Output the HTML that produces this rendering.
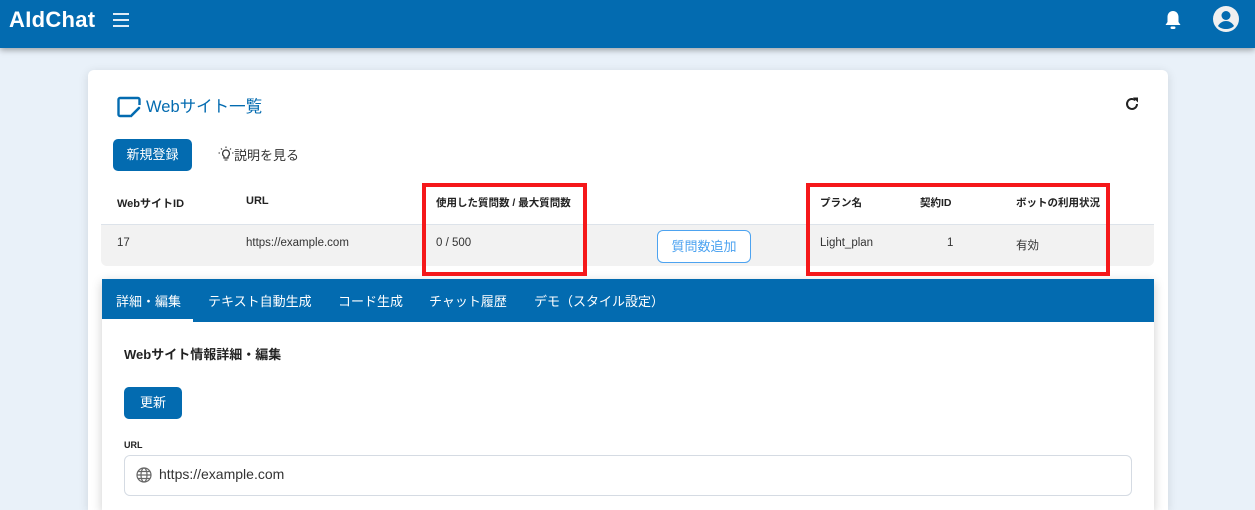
<!DOCTYPE html>
<html><head><meta charset="utf-8"><style>
*{box-sizing:border-box;margin:0;padding:0}
html{width:1255px;height:510px;overflow:hidden}
body{width:1255px;height:510px;overflow:hidden;background:#e9f1f9;font-family:"Liberation Sans","Noto Sans CJK JP",sans-serif;color:#222;position:relative}
.hdr{position:absolute;left:0;top:0;width:1255px;height:48px;background:#036bb0;box-shadow:0 2px 6px rgba(0,0,0,.35);z-index:2}
.logo{position:absolute;left:9px;top:7px;color:#fff;font-weight:bold;font-size:22px;letter-spacing:0.3px}
.card{position:absolute;left:88px;top:70px;width:1080px;height:440px;background:#fff;border-radius:6px 6px 0 0;box-shadow:0 2px 10px rgba(0,0,0,.12)}
.abs{position:absolute}
.th{position:absolute;top:195px;font-size:11px;font-weight:bold;color:#222}
.td{position:absolute;top:237px;font-size:11.5px;color:#333}
.red{position:absolute;border:4px solid #f5181a;z-index:3}
.tab{position:absolute;top:291px;font-size:13px;color:#fff}
</style></head><body>
<div class="hdr">
<div class="logo">AIdChat</div>
<svg class="abs" style="left:112px;top:12px" width="18" height="16" viewBox="0 0 18 16"><path d="M1 2h16M1 8h16M1 14h16" stroke="#fff" stroke-width="1.8"/></svg>
<svg class="abs" style="left:1163px;top:9px" width="20" height="22" viewBox="0 0 20 22"><path d="M10 2c-3.3 0-5.5 2.5-5.5 6v5L2.5 16h15l-2-3V8C15.5 4.5 13.3 2 10 2z" fill="#fff"/><rect x="7.5" y="17.5" width="5" height="2.5" rx="1.2" fill="#fff"/></svg>
<svg class="abs" style="left:1212px;top:5px" width="28" height="28" viewBox="0 0 28 28"><circle cx="14" cy="14" r="13" fill="#f0f0f0"/><circle cx="14" cy="10.5" r="4.5" fill="#036bb0"/><path d="M6 21c2-3.5 5-5 8-5s6 1.5 8 5c-2 2-5 3-8 3s-6-1-8-3z" fill="#036bb0"/></svg>
</div>
<div class="card"></div>
<svg class="abs" style="left:117px;top:96px" width="24" height="22" viewBox="0 0 24 22"><path d="M13 20H3a1.5 1.5 0 0 1-1.5-1.5v-15A1.5 1.5 0 0 1 3 2h18a1.5 1.5 0 0 1 1.5 1.5V9" fill="none" stroke="#036bb0" stroke-width="2.4"/><path d="M14 20l8-8" stroke="#036bb0" stroke-width="2.6" stroke-linecap="round"/></svg>
<div class="abs" style="left:146px;top:93px;font-size:16.5px;color:#036bb0">Webサイト一覧</div>
<svg class="abs" style="left:1124px;top:96px" width="16" height="16" viewBox="0 0 16 16"><path d="M13 8a5 5 0 1 1-1.6-3.7" fill="none" stroke="#222" stroke-width="2"/><path d="M9 1.5h5v5z" fill="#222"/></svg>
<div class="abs" style="left:113px;top:139px;width:79px;height:32px;background:#036bb0;border-radius:5px;color:#fff;font-size:13px;text-align:center;line-height:32px">新規登録</div>
<svg class="abs" style="left:218px;top:146px" width="16" height="16" viewBox="0 0 16 16"><path d="M8 4a3.5 3.5 0 0 0-2 6.3V12h4v-1.7A3.5 3.5 0 0 0 8 4z" fill="none" stroke="#333" stroke-width="1.2"/><path d="M6.5 14h3M8 0.5v1.5M2 7H.5M15.5 7H14M3 2.5l1 1M13 2.5l-1 1" stroke="#333" stroke-width="1.1"/></svg>
<div class="abs" style="left:234px;top:145px;font-size:13px;color:#333">説明を見る</div>
<div class="abs" style="left:101px;top:224px;width:1053px;height:1px;background:#dde3ea"></div>
<div class="abs" style="left:101px;top:225px;width:1053px;height:41px;background:#f2f2f2;border-radius:0 0 6px 6px"></div>
<div class="th" style="left:117px">Webサイト​ID</div>
<div class="th" style="left:246px">URL</div>
<div class="th" style="left:436px;font-size:10.5px">使用した質問数 / 最大質問数</div>
<div class="th" style="left:820px;font-size:10.5px">プラン名</div>
<div class="th" style="left:920px;font-size:10.5px">契約ID</div>
<div class="th" style="left:1016px;font-size:10.5px">ボットの利用状況</div>
<div class="td" style="left:117px">17</div>
<div class="td" style="left:246px">https://example.com</div>
<div class="td" style="left:436px">0 / 500</div>
<div class="abs" style="left:657px;top:230px;width:94px;height:33px;border:1px solid #4da3f0;border-radius:6px;color:#4da3f0;font-size:13px;text-align:center;line-height:31px;background:#fff">質問数追加</div>
<div class="td" style="left:820px">Light_plan</div>
<div class="td" style="left:947px">1</div>
<div class="td" style="left:1016px">有効</div>
<div class="red" style="left:422px;top:183px;width:165px;height:93px"></div>
<div class="red" style="left:806px;top:183px;width:304px;height:93px"></div>
<div class="abs" style="left:102px;top:279px;width:1052px;height:231px;background:#fff;box-shadow:0 3px 10px rgba(0,0,0,.2)"></div>
<div class="abs" style="left:102px;top:279px;width:1052px;height:43px;background:#036bb0"></div>
<div class="abs" style="left:102px;top:319px;width:91px;height:3px;background:#fff"></div>
<div class="tab" style="left:116px">詳細・編集</div>
<div class="tab" style="left:208px">テキスト自動生成</div>
<div class="tab" style="left:338px">コード生成</div>
<div class="tab" style="left:429px">チャット履歴</div>
<div class="tab" style="left:534px">デモ（スタイル設定）</div>
<div class="abs" style="left:124px;top:344px;font-size:13px;font-weight:bold;color:#222">Webサイト情報詳細・編集</div>
<div class="abs" style="left:124px;top:387px;width:58px;height:32px;background:#036bb0;border-radius:5px;color:#fff;font-size:13px;text-align:center;line-height:32px">更新</div>
<div class="abs" style="left:124px;top:440px;font-size:9px;font-weight:bold;color:#222">URL</div>
<div class="abs" style="left:124px;top:455px;width:1008px;height:41px;border:1px solid #d5dbe3;border-radius:6px"></div>
<svg class="abs" style="left:136px;top:467px" width="16" height="16" viewBox="0 0 16 16"><g fill="none" stroke="#666" stroke-width="1.2"><circle cx="8" cy="8" r="7"/><ellipse cx="8" cy="8" rx="3" ry="7"/><path d="M1 8h14M2 4.5h12M2 11.5h12"/></g></svg>
<div class="abs" style="left:159px;top:466px;font-size:14px;color:#333">https://example.com</div>
</body></html>
